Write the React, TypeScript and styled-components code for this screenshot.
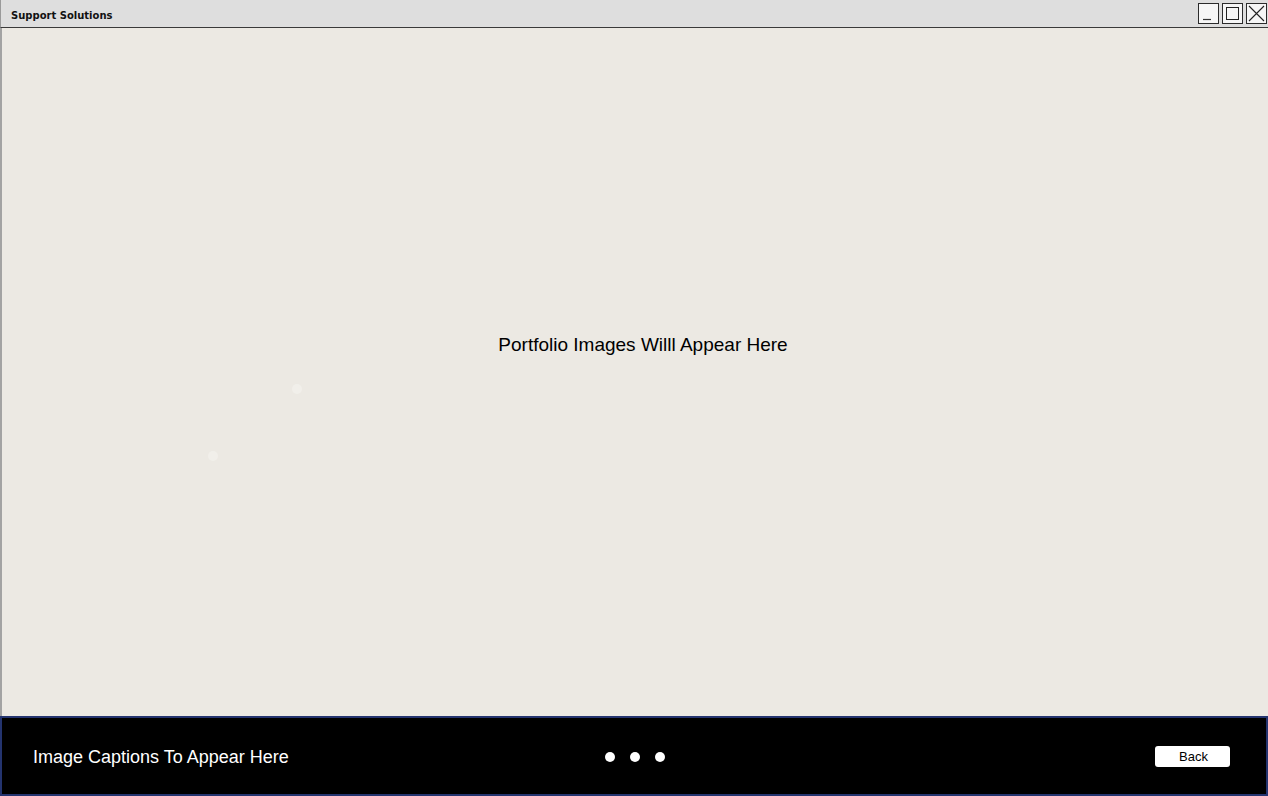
import React from "react";
import styled, { createGlobalStyle } from "styled-components";

const Global = createGlobalStyle`
  html, body { margin: 0; padding: 0; background: #ece9e3; }
  body { font-family: "Liberation Sans", Arial, sans-serif; }
`;

const Window = styled.div`
  width: 1268px;
  height: 796px;
  display: flex;
  flex-direction: column;
  box-sizing: border-box;
  overflow: hidden;
`;

const TitleBar = styled.div`
  height: 28px;
  flex: none;
  box-sizing: border-box;
  display: flex;
  align-items: center;
  justify-content: space-between;
  background: #dedede;
  border-bottom: 1px solid #3a3a3a;
  border-left: 1px solid #9a9a9a;
  padding: 0 1px 0 10px;
`;

const Title = styled.span`
  font-family: "Comic Sans MS", "DejaVu Sans", sans-serif;
  font-weight: bold;
  font-size: 10px;
  color: #111;
  padding-top: 4px;
`;

const Controls = styled.div`
  display: flex;
  gap: 3px;
  align-self: flex-start;
  padding-top: 3px;
`;

const CtrlButton = styled.div`
  width: 21px;
  height: 21px;
  box-sizing: border-box;
  border: 1px solid #2b2b2b;
  background: #f6f6f6;
  display: flex;
  align-items: center;
  justify-content: center;
`;

const Content = styled.main`
  position: relative;
  flex: 1;
  background: #ece9e3;
  border-left: 2px solid #a3a3a3;
  display: flex;
  justify-content: center;
  padding-top: 306px;
  padding-left: 16px;
  box-sizing: border-box;
`;

const Placeholder = styled.div`
  font-size: 19px;
  color: #000;
  line-height: 22px;
  height: 22px;
`;

const Speck = styled.div<{ $x: number; $y: number }>`
  position: absolute;
  left: ${(p) => p.$x}px;
  top: ${(p) => p.$y}px;
  width: 10px;
  height: 10px;
  border-radius: 50%;
  background: #f1efea;
`;

const Footer = styled.footer`
  height: 80px;
  flex: none;
  box-sizing: border-box;
  background: #000;
  border: 2px solid #24346f;
  display: grid;
  grid-template-columns: 1fr auto 1fr;
  align-items: center;
  padding: 2px 37px 0 31px;
`;

const Caption = styled.div`
  color: #fff;
  font-size: 18px;
`;

const Dots = styled.div`
  display: flex;
  gap: 15px;
  margin-left: 8px;
`;

const Dot = styled.span`
  width: 10px;
  height: 10px;
  border-radius: 50%;
  background: #fff;
`;

const BackButton = styled.button`
  justify-self: end;
  width: 75px;
  height: 21px;
  margin: -2px -1px 0 0;
  border: none;
  border-radius: 3px;
  background: #fff;
  color: #000;
  font-family: "Liberation Sans", Arial, sans-serif;
  font-size: 13px;
  padding: 0 0 0 2px;
  cursor: pointer;
`;

export default function App() {
  return (
    <>
      <Global />
      <Window>
        <TitleBar>
          <Title>Support Solutions</Title>
          <Controls>
            <CtrlButton>
              <svg width="19" height="19" viewBox="0 0 19 19">
                <line x1="4" y1="15.5" x2="12" y2="15.5" stroke="#333" strokeWidth="1.2" />
              </svg>
            </CtrlButton>
            <CtrlButton>
              <svg width="19" height="19" viewBox="0 0 19 19">
                <rect x="3.5" y="3.5" width="12" height="12" fill="none" stroke="#222" strokeWidth="1" />
              </svg>
            </CtrlButton>
            <CtrlButton>
              <svg width="19" height="19" viewBox="0 0 19 19">
                <path d="M2 2 L17 17 M17 2 L2 17" stroke="#222" strokeWidth="1.1" fill="none" />
              </svg>
            </CtrlButton>
          </Controls>
        </TitleBar>
        <Content>
          <Placeholder>Portfolio Images Willl Appear Here</Placeholder>
          <Speck $x={290} $y={356} />
          <Speck $x={206} $y={423} />
        </Content>
        <Footer>
          <Caption>Image Captions To Appear Here</Caption>
          <Dots>
            <Dot />
            <Dot />
            <Dot />
          </Dots>
          <BackButton>Back</BackButton>
        </Footer>
      </Window>
    </>
  );
}
